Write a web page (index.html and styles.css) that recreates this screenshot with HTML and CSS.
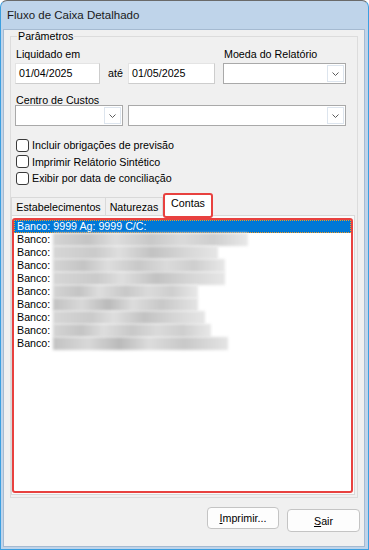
FILE: index.html
```html
<!DOCTYPE html>
<html lang="pt-BR">
<head>
  <meta charset="UTF-8" />
  <title>Fluxo de Caixa Detalhado</title>
  <link rel="stylesheet" href="styles.css">
</head>
<body>
  <div class="window">
    <div class="titlebar">Fluxo de Caixa Detalhado</div>
    <div class="client">
      <fieldset class="params">
        <legend>Parâmetros</legend>

        <div class="row top-row">
          <div class="field">
            <label>Liquidado em</label>
            <div class="edit w-date1">01/04/2025</div>
          </div>
          <span class="ate">até</span>
          <div class="field">
            <div class="edit w-date2">01/05/2025</div>
          </div>
          <div class="field moeda">
            <label>Moeda do Relatório</label>
            <div class="combo w-moeda">
              <span class="drop"><svg width="7" height="4" viewBox="0 0 7 4"><polyline points="0.5,0.5 3.5,3.5 6.5,0.5" fill="none" stroke="#5b5b5b" stroke-width="1"/></svg></span>
            </div>
          </div>
        </div>

        <div class="field centro">
          <label>Centro de Custos</label>
          <div class="row combos">
            <div class="combo w-cc1">
              <span class="drop"><svg width="7" height="4" viewBox="0 0 7 4"><polyline points="0.5,0.5 3.5,3.5 6.5,0.5" fill="none" stroke="#5b5b5b" stroke-width="1"/></svg></span>
            </div>
            <div class="combo w-cc2">
              <span class="drop"><svg width="7" height="4" viewBox="0 0 7 4"><polyline points="0.5,0.5 3.5,3.5 6.5,0.5" fill="none" stroke="#5b5b5b" stroke-width="1"/></svg></span>
            </div>
          </div>
        </div>

        <div class="checks">
          <label class="check"><span class="box"></span>Incluir obrigações de previsão</label>
          <label class="check"><span class="box"></span>Imprimir Relátorio Sintético</label>
          <label class="check"><span class="box"></span>Exibir por data de conciliação</label>
        </div>

        <div class="tabs">
          <div class="tab t-estab">Estabelecimentos</div>
          <div class="tab t-nat">Naturezas</div>
          <div class="tab active">Contas</div>
        </div>
        <div class="tabpage">
          <div class="listbox">
            <div class="item selected">Banco: 9999 Ag: 9999 C/C:</div>
            <div class="item">Banco: <span class="blur" style="width:195px"></span></div>
            <div class="item">Banco: <span class="blur b2" style="width:165px"></span></div>
            <div class="item">Banco: <span class="blur" style="width:172px"></span></div>
            <div class="item">Banco: <span class="blur b2" style="width:172px"></span></div>
            <div class="item">Banco: <span class="blur" style="width:145px"></span></div>
            <div class="item">Banco: <span class="blur b3" style="width:145px"></span></div>
            <div class="item">Banco: <span class="blur b2" style="width:152px"></span></div>
            <div class="item">Banco: <span class="blur" style="width:158px"></span></div>
            <div class="item">Banco: <span class="blur b3" style="width:175px"></span></div>
          </div>
        </div>
      </fieldset>

      <div class="actions">
        <button class="btn"><u>I</u>mprimir...</button>
        <button class="btn sair"><u>S</u>air</button>
      </div>
    </div>
  </div>
</body>
</html>
```

FILE: styles.css
```css
* { box-sizing: border-box; }
body {
  margin: 0;
  background: #ffffff;
  font-family: "Liberation Sans", Arial, sans-serif;
  font-size: 10.7px;
  color: #000;
}

/* window frame */
.window {
  width: 369px; height: 550px;
  display: flex; flex-direction: column;
  background: #bfd4ea;
  border: 1px solid #3c9fe0;
  border-top-color: #6a6a6a;
  border-radius: 7px 7px 0 0;
  padding: 0 3px 2px 2px;
}
.titlebar {
  height: 28px; line-height: 28px;
  padding-left: 4px;
  font-size: 11.5px;
  color: #1a1a1a;
}
.client {
  flex: 1;
  display: flex; flex-direction: column;
  background: #f0f0f0;
  border: 1px solid #a5bad1;
}

/* group box */
.params {
  margin: 0 6px;
  padding: 0 0 2px 0;
  border: 1px solid #dcdcdc;
  min-width: 0;
}
.params legend {
  margin-left: 6px; padding: 0 1px;
  line-height: 13px;
}

.row { display: flex; align-items: flex-end; }
.field { display: flex; flex-direction: column; }
.field label { line-height: 13px; padding-left: 1px; margin-bottom: 2px; }
.top-row { margin-top: 5px; padding-left: 4px; }
.ate { width: 28px; line-height: 21px; padding-left: 8px; }
.moeda { margin-left: 8px; }
.centro { margin-top: 10px; padding-left: 4px; }
.combos { gap: 5px; margin-top: -4px; }

.edit {
  height: 21px; line-height: 19px;
  background: #fff;
  border: 1px solid #e4e4e4;
  border-right-color: #cdcdcd; border-bottom-color: #cdcdcd;
  padding: 0 3px;
}
.combo {
  height: 21px;
  display: flex; justify-content: flex-end;
  background: #fff;
  border: 1px solid #a9a9a9;
  padding: 1px;
}
.drop {
  width: 17px;
  display: flex; align-items: center; justify-content: center;
  border: 1px solid #dde5ee;
}
.w-date1 { width: 85px; }
.w-date2 { width: 87px; }
.w-moeda { width: 123px; }
.w-cc1 { width: 108px; }
.w-cc2 { width: 218px; }

/* check boxes */
.checks { margin-top: 11px; padding-left: 5px; }
.check {
  display: flex; align-items: center;
  height: 16.5px;
}
.box {
  width: 13px; height: 13px;
  border: 1px solid #3a3a3a;
  border-radius: 3px;
  background: #fff;
  margin-right: 3px;
}

/* tabs */
.tabs {
  display: flex; align-items: flex-end;
  margin-top: 6.5px;
  height: 22px;
}
.tab {
  height: 18px; line-height: 18px;
  text-align: center;
  background: #f0f0f0;
  border-top: 1px solid #d9d9d9;
  border-right: 1px solid #d9d9d9;
}
.t-estab { width: 95px; border-left: 1px solid #d9d9d9; }
.t-nat { width: 57px; }
.tab.active {
  position: relative; z-index: 1;
  width: 50px; height: 25px;
  line-height: 16px;
  margin-bottom: -3px;
  background: #fff;
  border: 2px solid #e8413f;
  border-radius: 3px;
}
.tabpage {
  height: 280px;
  margin-right: 2px;
  background: #fbfbfb;
  border: 1px solid #d9d9d9;
  padding: 2px 1px 1px 0;
}
.listbox {
  height: 275px;
  background: #fff;
  border: 2px solid #e8413f;
  border-radius: 3px;
}
.item {
  height: 13px; line-height: 13px;
  padding-left: 3px;
  white-space: nowrap;
}
.item.selected {
  background: #0078d7;
  color: #fff;
  outline: 1px dotted #f39a1e;
  outline-offset: -1px;
}
.blur {
  display: inline-block;
  height: 13px;
  vertical-align: top;
  background: linear-gradient(90deg, #d4d4d4 0%, #c4c4c4 18%, #dddddd 32%, #c8c8c8 50%, #dadada 66%, #cecece 82%, #e8e8e8 100%);
  filter: blur(1.8px);
}
.blur.b2 {
  background: linear-gradient(90deg, #d6d6d6 0%, #cacaca 25%, #dedede 40%, #c2c2c2 60%, #d4d4d4 78%, #e6e6e6 100%);
}
.blur.b3 {
  background: linear-gradient(90deg, #c2c2c2 0%, #d8d8d8 20%, #bababa 38%, #dcdcdc 55%, #c8c8c8 75%, #e4e4e4 100%);
}

/* buttons */
.actions {
  display: flex; justify-content: flex-end; align-items: flex-start;
  gap: 8px;
  margin-top: 9px;
  padding-right: 4px;
}
.btn {
  width: 72px; height: 22px;
  padding: 0;
  font: inherit; color: #000;
  background: #fdfdfd;
  border: 1px solid #c4c4c4;
  border-radius: 4px;
}
.btn.sair { width: 73px; height: 23px; margin-top: 2px; }
```
